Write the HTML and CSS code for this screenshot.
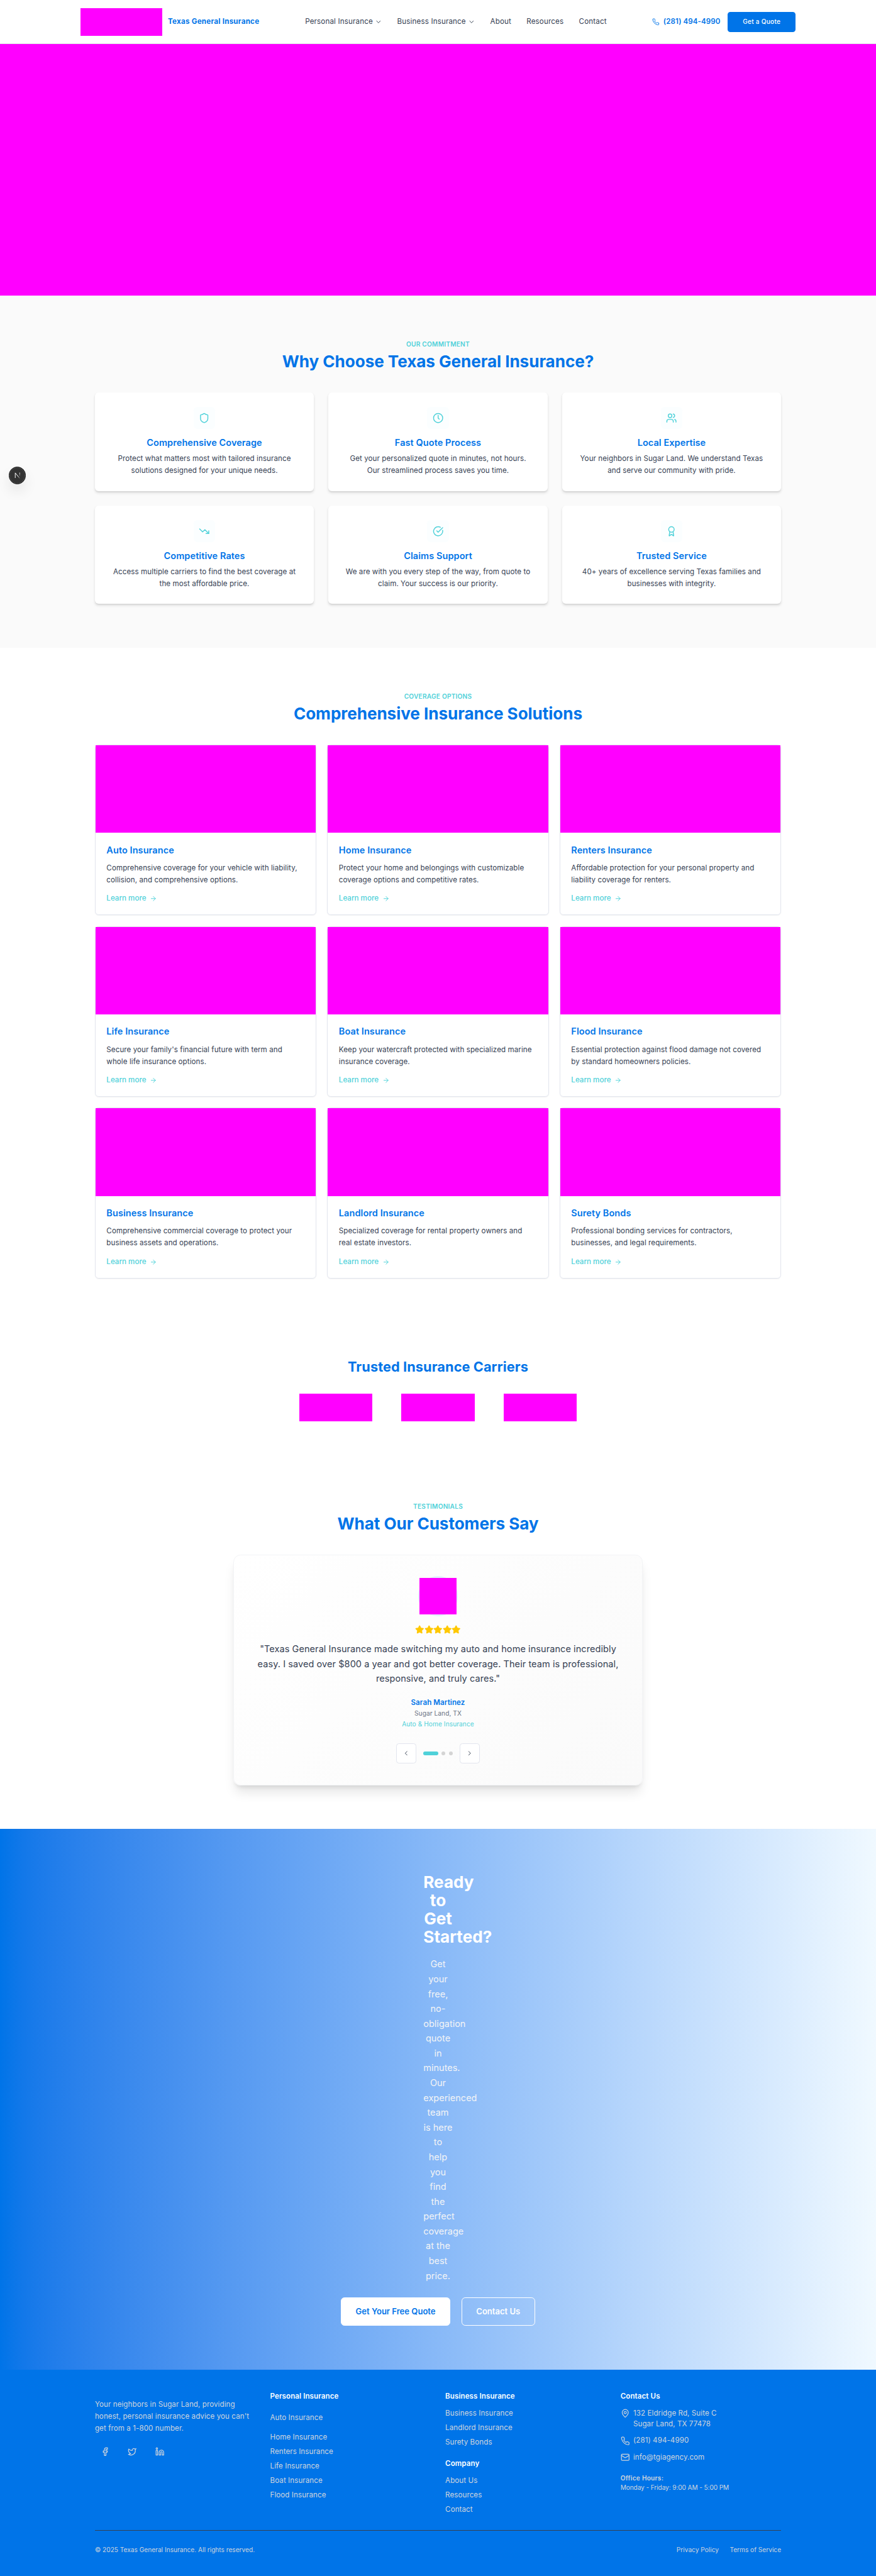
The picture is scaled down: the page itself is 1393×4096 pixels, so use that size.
FILE: index.html
```html
<!DOCTYPE html>
<html lang="en">
<head>
<meta charset="utf-8">
<title>Texas General Insurance</title>
<link rel="stylesheet" href="styles.css">
</head>
<body>
<svg class="sprite" aria-hidden="true">
  <symbol id="chevron-down" viewBox="0 0 24 24"><path d="m6 9 6 6 6-6"/></symbol>
  <symbol id="chevron-left" viewBox="0 0 24 24"><path d="m15 18-6-6 6-6"/></symbol>
  <symbol id="chevron-right" viewBox="0 0 24 24"><path d="m9 18 6-6-6-6"/></symbol>
  <symbol id="arrow-right" viewBox="0 0 24 24"><path d="M5 12h14"/><path d="m12 5 7 7-7 7"/></symbol>
  <symbol id="phone" viewBox="0 0 24 24"><path d="M22 16.92v3a2 2 0 0 1-2.18 2 19.79 19.79 0 0 1-8.63-3.07 19.5 19.5 0 0 1-6-6 19.79 19.79 0 0 1-3.07-8.67A2 2 0 0 1 4.11 2h3a2 2 0 0 1 2 1.72 12.84 12.84 0 0 0 .7 2.81 2 2 0 0 1-.45 2.11L8.09 9.91a16 16 0 0 0 6 6l1.27-1.27a2 2 0 0 1 2.11-.45 12.84 12.84 0 0 0 2.81.7A2 2 0 0 1 22 16.92z"/></symbol>
  <symbol id="shield" viewBox="0 0 24 24"><path d="M20 13c0 5-3.5 7.5-7.66 8.95a1 1 0 0 1-.67-.01C7.5 20.5 4 18 4 13V6a1 1 0 0 1 1-1c2 0 4.500-1.200 6.240-2.720a1.170 1.170 0 0 1 1.520 0C14.510 3.810 17 5 19 5a1 1 0 0 1 1 1z"/></symbol>
  <symbol id="clock" viewBox="0 0 24 24"><circle cx="12" cy="12" r="10"/><path d="M12 6v6l2.500 2.500"/></symbol>
  <symbol id="users" viewBox="0 0 24 24"><path d="M16 21v-2a4 4 0 0 0-4-4H6a4 4 0 0 0-4 4v2"/><circle cx="9" cy="7" r="4"/><path d="M22 21v-2a4 4 0 0 0-3-3.870"/><path d="M16 3.130a4 4 0 0 1 0 7.750"/></symbol>
  <symbol id="trending-down" viewBox="0 0 24 24"><path d="M16 17h6v-6"/><path d="m22 17-8.500-8.500-5 5L2 7"/></symbol>
  <symbol id="circle-check" viewBox="0 0 24 24"><path d="M21.801 10A10 10 0 1 1 17 3.335"/><path d="m9 11 3 3L22 4"/></symbol>
  <symbol id="award" viewBox="0 0 24 24"><path d="m15.477 12.890 1.515 8.526a.5.5 0 0 1-.81.47l-3.580-2.687a1 1 0 0 0-1.197 0l-3.586 2.686a.5.5 0 0 1-.81-.469l1.514-8.526"/><circle cx="12" cy="8" r="6"/></symbol>
  <symbol id="star" viewBox="0 0 24 24"><path d="M11.525 2.295a.53.53 0 0 1 .95 0l2.310 4.679a2.123 2.123 0 0 0 1.595 1.160l5.166.756a.53.53 0 0 1 .294.904l-3.736 3.638a2.123 2.123 0 0 0-.611 1.878l.882 5.140a.53.53 0 0 1-.771.560l-4.618-2.428a2.122 2.122 0 0 0-1.973 0L6.396 21.010a.53.53 0 0 1-.77-.560l.881-5.139a2.122 2.122 0 0 0-.611-1.879L2.160 9.795a.53.53 0 0 1 .294-.906l5.165-.755a2.122 2.122 0 0 0 1.597-1.160z"/></symbol>
  <symbol id="facebook" viewBox="0 0 24 24"><path d="M18 2h-3a5 5 0 0 0-5 5v3H7v4h3v8h4v-8h3l1-4h-4V7a1 1 0 0 1 1-1h3z"/></symbol>
  <symbol id="twitter" viewBox="0 0 24 24"><path d="M22 4s-.7 2.100-2 3.400c1.600 10-9.400 17.300-18 11.600 2.200.1 4.400-.6 6-2C3 15.500.5 9.600 3 5c2.200 2.600 5.600 4.100 9 4-.9-4.200 4-6.600 7-3.800 1.100 0 3-1.200 3-1.200z"/></symbol>
  <symbol id="linkedin" viewBox="0 0 24 24"><path d="M16 8a6 6 0 0 1 6 6v7h-4v-7a2 2 0 0 0-4 0v7h-4v-7a6 6 0 0 1 6-6z"/><rect x="2" y="9" width="4" height="12"/><circle cx="4" cy="4" r="2"/></symbol>
  <symbol id="map-pin" viewBox="0 0 24 24"><path d="M20 10c0 4.993-5.539 10.193-7.399 11.799a1 1 0 0 1-1.202 0C9.539 20.193 4 14.993 4 10a8 8 0 0 1 16 0"/><circle cx="12" cy="10" r="3"/></symbol>
  <symbol id="mail" viewBox="0 0 24 24"><rect x="2" y="4" width="20" height="16" rx="2"/><path d="m22 7-8.991 5.727a2 2 0 0 1-2.009 0L2 7"/></symbol>
</svg>

<header class="header">
  <div class="header-inner">
    <div class="brand"><div class="brand-logo"></div><span class="brand-name">Texas General Insurance</span></div>
    <nav class="nav">
      <a>Personal Insurance <svg class="icon nav-chevron"><use href="#chevron-down"/></svg></a>
      <a>Business Insurance <svg class="icon nav-chevron"><use href="#chevron-down"/></svg></a>
      <a>About</a>
      <a>Resources</a>
      <a>Contact</a>
    </nav>
    <div class="header-actions">
      <a class="header-phone"><svg class="icon"><use href="#phone"/></svg><span>(281) 494-4990</span></a>
      <a class="header-cta">Get a Quote</a>
    </div>
  </div>
</header>

<main>
<div class="hero"></div>

<section class="section features">
  <div class="container">
    <p class="eyebrow">OUR COMMITMENT</p>
    <h2 class="title">Why Choose Texas General Insurance?</h2>
    <div class="feature-grid">
      <article class="feature"><div class="feature-icon"><svg class="icon"><use href="#shield"/></svg></div><h3>Comprehensive Coverage</h3><p>Protect what matters most with tailored insurance<br>solutions designed for your unique needs.</p></article>
      <article class="feature"><div class="feature-icon"><svg class="icon"><use href="#clock"/></svg></div><h3>Fast Quote Process</h3><p>Get your personalized quote in minutes, not hours.<br>Our streamlined process saves you time.</p></article>
      <article class="feature"><div class="feature-icon"><svg class="icon"><use href="#users"/></svg></div><h3>Local Expertise</h3><p>Your neighbors in Sugar Land. We understand Texas<br>and serve our community with pride.</p></article>
      <article class="feature"><div class="feature-icon"><svg class="icon"><use href="#trending-down"/></svg></div><h3>Competitive Rates</h3><p>Access multiple carriers to find the best coverage at<br>the most affordable price.</p></article>
      <article class="feature"><div class="feature-icon"><svg class="icon"><use href="#circle-check"/></svg></div><h3>Claims Support</h3><p>We are with you every step of the way, from quote to<br>claim. Your success is our priority.</p></article>
      <article class="feature"><div class="feature-icon"><svg class="icon"><use href="#award"/></svg></div><h3>Trusted Service</h3><p>40+ years of excellence serving Texas families and<br>businesses with integrity.</p></article>
    </div>
  </div>
</section>

<section class="section">
  <div class="container">
    <p class="eyebrow">COVERAGE OPTIONS</p>
    <h2 class="title">Comprehensive Insurance Solutions</h2>
    <div class="service-grid">
      <article class="service"><div class="service-image"></div><div class="service-body"><h3>Auto Insurance</h3><p>Comprehensive coverage for your vehicle with liability,<br>collision, and comprehensive options.</p><a>Learn more <svg class="icon"><use href="#arrow-right"/></svg></a></div></article>
      <article class="service"><div class="service-image"></div><div class="service-body"><h3>Home Insurance</h3><p>Protect your home and belongings with customizable<br>coverage options and competitive rates.</p><a>Learn more <svg class="icon"><use href="#arrow-right"/></svg></a></div></article>
      <article class="service"><div class="service-image"></div><div class="service-body"><h3>Renters Insurance</h3><p>Affordable protection for your personal property and<br>liability coverage for renters.</p><a>Learn more <svg class="icon"><use href="#arrow-right"/></svg></a></div></article>
      <article class="service"><div class="service-image"></div><div class="service-body"><h3>Life Insurance</h3><p>Secure your family's financial future with term and<br>whole life insurance options.</p><a>Learn more <svg class="icon"><use href="#arrow-right"/></svg></a></div></article>
      <article class="service"><div class="service-image"></div><div class="service-body"><h3>Boat Insurance</h3><p>Keep your watercraft protected with specialized marine<br>insurance coverage.</p><a>Learn more <svg class="icon"><use href="#arrow-right"/></svg></a></div></article>
      <article class="service"><div class="service-image"></div><div class="service-body"><h3>Flood Insurance</h3><p>Essential protection against flood damage not covered<br>by standard homeowners policies.</p><a>Learn more <svg class="icon"><use href="#arrow-right"/></svg></a></div></article>
      <article class="service"><div class="service-image"></div><div class="service-body"><h3>Business Insurance</h3><p>Comprehensive commercial coverage to protect your<br>business assets and operations.</p><a>Learn more <svg class="icon"><use href="#arrow-right"/></svg></a></div></article>
      <article class="service"><div class="service-image"></div><div class="service-body"><h3>Landlord Insurance</h3><p>Specialized coverage for rental property owners and<br>real estate investors.</p><a>Learn more <svg class="icon"><use href="#arrow-right"/></svg></a></div></article>
      <article class="service"><div class="service-image"></div><div class="service-body"><h3>Surety Bonds</h3><p>Professional bonding services for contractors,<br>businesses, and legal requirements.</p><a>Learn more <svg class="icon"><use href="#arrow-right"/></svg></a></div></article>
    </div>
  </div>
</section>

<section class="carriers">
  <h2>Trusted Insurance Carriers</h2>
  <div class="carrier-row"><div class="carrier"></div><div class="carrier"></div><div class="carrier"></div></div>
</section>

<section class="section">
  <p class="eyebrow">TESTIMONIALS</p>
  <h2 class="title">What Our Customers Say</h2>
  <div class="testimonial">
    <div class="avatar"><div class="avatar-image"></div></div>
    <div class="stars"><svg class="icon"><use href="#star"/></svg><svg class="icon"><use href="#star"/></svg><svg class="icon"><use href="#star"/></svg><svg class="icon"><use href="#star"/></svg><svg class="icon"><use href="#star"/></svg></div>
    <blockquote>"Texas General Insurance made switching my auto and home insurance incredibly<br>easy. I saved over $800 a year and got better coverage. Their team is professional,<br>responsive, and truly cares."</blockquote>
    <p class="author">Sarah Martinez</p>
    <p class="place">Sugar Land, TX</p>
    <p class="policy">Auto &amp; Home Insurance</p>
    <div class="pager">
      <button aria-label="Previous"><svg class="icon"><use href="#chevron-left"/></svg></button>
      <div class="dots"><i class="dot active"></i><i class="dot"></i><i class="dot"></i></div>
      <button aria-label="Next"><svg class="icon"><use href="#chevron-right"/></svg></button>
    </div>
  </div>
</section>

<section class="cta">
  <div class="cta-text">
    <h2>Ready to Get Started?</h2>
    <p>Get your free, no-obligation quote in minutes. Our experienced team is&nbsp;here to help you find the perfect coverage at&nbsp;the best price.</p>
  </div>
  <div class="cta-buttons"><a class="btn btn-solid">Get Your Free Quote</a><a class="btn btn-outline">Contact Us</a></div>
</section>
</main>

<footer class="footer">
  <div class="container">
    <div class="footer-grid">
      <div>
        <p class="blurb">Your neighbors in Sugar Land, providing<br>honest, personal insurance advice you can't<br>get from a 1-800 number.</p>
        <div class="social">
          <a><svg class="icon"><use href="#facebook"/></svg></a><a><svg class="icon"><use href="#twitter"/></svg></a><a><svg class="icon"><use href="#linkedin"/></svg></a>
        </div>
      </div>
      <div>
        <h4>Personal Insurance</h4>
        <ul><li class="tall">Auto Insurance</li><li>Home Insurance</li><li>Renters Insurance</li><li>Life Insurance</li><li>Boat Insurance</li><li>Flood Insurance</li></ul>
      </div>
      <div>
        <h4>Business Insurance</h4>
        <ul><li>Business Insurance</li><li>Landlord Insurance</li><li>Surety Bonds</li></ul>
        <h4 class="second">Company</h4>
        <ul><li>About Us</li><li>Resources</li><li>Contact</li></ul>
      </div>
      <div>
        <h4>Contact Us</h4>
        <ul class="contact">
          <li class="address"><svg class="icon"><use href="#map-pin"/></svg><span>132 Eldridge Rd, Suite C<br>Sugar Land, TX 77478</span></li>
          <li><svg class="icon"><use href="#phone"/></svg><span>(281) 494-4990</span></li>
          <li><svg class="icon"><use href="#mail"/></svg><span>info@tgiagency.com</span></li>
        </ul>
        <p class="hours"><b>Office Hours:</b><br><span>Monday - Friday: 9:00 AM - 5:00 PM</span></p>
      </div>
    </div>
    <div class="legal"><p class="copyright">© 2025 Texas General Insurance. All rights reserved.</p><div class="legal-links"><a>Privacy Policy</a><a>Terms of Service</a></div></div>
  </div>
</footer>

<div class="dev-badge"><svg viewBox="0 0 36 36"><defs><linearGradient id="badge-fade" x1="0" y1="0" x2="0" y2="1"><stop offset="0" stop-color="#fff"/><stop offset="1" stop-color="#fff" stop-opacity="0"/></linearGradient><linearGradient id="badge-diagonal" x1="0" y1="0" x2="1" y2="1"><stop offset=".6" stop-color="#fff"/><stop offset="1" stop-color="#fff" stop-opacity=".2"/></linearGradient></defs><path d="M13 24V12.500" stroke="#fff"/><path d="M13 12.500 23.200 25" stroke="url(#badge-diagonal)"/><rect x="22.300" y="12" width="1.300" height="9" fill="url(#badge-fade)"/></svg></div>
</body>
</html>
```
FILE: styles.css
```css
/* 1rem is ten design pixels: the 1920px design is scaled to a 1393px page */
html { font-size: 7.2548px; }
*, *::before, *::after { box-sizing: border-box; }
body, h2, h3, h4, p, ul, blockquote { margin: 0; padding: 0; }
body {
  position: relative;
  font-family: Inter, "Liberation Sans", sans-serif;
  font-size: 1.6rem;
  line-height: 2.4rem;
  letter-spacing: .01rem;
  color: #364153;
  background: #fff;
  overflow-x: hidden;
}
ul { list-style: none; }
a { white-space: nowrap; }
.sprite { position: absolute; width: 0; height: 0; }
.icon {
  display: block; flex: none;
  width: 1.6rem; height: 1.6rem;
  fill: none; stroke: currentColor; stroke-width: 2;
  stroke-linecap: round; stroke-linejoin: round;
}
.container { width: 150.4rem; margin: 0 auto; }

.header { height: 9.7rem; border-bottom: 1px solid #dfe2e8; background: #fff; }
.header-inner { width: 156.8rem; height: 9.6rem; margin: 0 auto; display: flex; align-items: center; justify-content: space-between; }
.brand { display: flex; align-items: center; gap: 1.2rem; }
.brand-logo { width: 18rem; height: 6rem; background: #f0f; }
.brand-name { font-weight: 700; letter-spacing: .035rem; color: #0074e8; }
.nav { display: flex; gap: 3.35rem; letter-spacing: .02rem; }
.nav a { display: flex; align-items: center; gap: .4rem; }
.header-actions { display: flex; align-items: center; gap: 1.6rem; }
.header-phone { display: flex; align-items: center; gap: .8rem; color: #0074e8; font-weight: 600; }
.header-cta { width: 14.9rem; height: 4.4rem; border-radius: .6rem; background: #0074e8; color: #fff; font-size: 1.4rem; font-weight: 500; line-height: 4.4rem; letter-spacing: .03rem; text-align: center; }
.hero { height: 55.1rem; background: #f0f; }

.section { padding: 9.6rem 0; }
.eyebrow { font-size: 1.4rem; line-height: 2rem; font-weight: 600; letter-spacing: .03rem; color: #4fd1d9; text-align: center; }
.title { margin-top: .8rem; font-size: 3.6rem; line-height: 4rem; font-weight: 700; letter-spacing: -.008rem; color: #0074e8; text-align: center; }

.features { background: #fafafa; }
.feature-grid { margin-top: 4.8rem; display: grid; grid-template-columns: repeat(3, 1fr); gap: 3.2rem; }
.feature { height: 21.6rem; padding-top: 3.2rem; border-radius: .8rem; background: #fff; text-align: center; box-shadow: 0 .4rem .6rem -.1rem rgba(0,0,0,.1), 0 .2rem .4rem -.2rem rgba(0,0,0,.1); }
.feature-icon { width: 4.8rem; height: 4.8rem; margin: 0 auto 1.65rem; border-radius: .8rem; background: #fbfeff; color: #4fd1d9; display: grid; place-items: center; }
.feature-icon .icon { width: 2.4rem; height: 2.4rem; }
.feature h3, .service h3 { font-size: 2rem; line-height: 2.8rem; font-weight: 600; letter-spacing: .01rem; color: #0074e8; }
.feature p { margin-top: .8rem; line-height: 2.6rem; }

.service-grid { margin-top: 4.8rem; display: grid; grid-template-columns: repeat(3, 1fr); gap: 2.4rem; }
.service { height: 37.4rem; border: 1px solid #e2e5ee; border-radius: .8rem; box-shadow: 0 .1rem .2rem rgba(0,0,0,.05); }
.service-image { height: 19.2rem; background: #f0f; }
.service-body { padding: 2.4rem; }
.service p { margin-top: 1.25rem; line-height: 2.6rem; }
.service a { margin-top: 1.6rem; display: flex; align-items: center; gap: .8rem; color: #4fd1d9; font-weight: 500; letter-spacing: 0; }

.carriers { padding: 8rem 0; text-align: center; }
.carriers h2 { font-size: 3rem; line-height: 3.6rem; font-weight: 700; color: #0074e8; }
.carrier-row { margin-top: 4rem; display: flex; justify-content: center; gap: 6.4rem; }
.carrier { width: 16rem; height: 6.2rem; background: #f0f; }

.testimonial { width: 89.6rem; height: 50.5rem; margin: 4.8rem auto 0; padding-top: 4.5rem; border: 1px solid #f3f4f6; border-radius: 1.6rem; background: linear-gradient(135deg, #fff, #fafafa); text-align: center; box-shadow: 0 2rem 2.500rem -.5rem rgba(0,0,0,.1), 0 .8rem 1rem -.6rem rgba(0,0,0,.1); }
.avatar { width: 8.8rem; height: 8.8rem; margin: 0 auto; border-radius: 50%; background: #e3f1fc; display: grid; place-items: center; }
.avatar-image { width: 8rem; height: 8rem; background: #f0f; }
.stars { margin-top: 2rem; display: flex; justify-content: center; color: #ffc800; }
.stars .icon { width: 2rem; height: 2rem; fill: currentColor; }
.testimonial blockquote { margin-top: 1.55rem; font-size: 2rem; line-height: 3.250rem; }
.author { margin-top: 2.55rem; font-weight: 600; color: #0074e8; }
.place { margin-top: .05rem; font-size: 1.4rem; line-height: 2rem; color: #6a7282; }
.policy { margin-top: .4rem; font-size: 1.4rem; line-height: 2rem; color: #4fd1d9; }
.pager { margin-top: 3.2rem; display: flex; align-items: center; justify-content: center; gap: 1.6rem; }
.pager button { width: 4.4rem; height: 4.4rem; padding: 0; border: 1px solid #e2e5ee; border-radius: .6rem; background: #fff; color: #364153; display: grid; place-items: center; }
.dots { display: flex; gap: .8rem; }
.dot { width: .8rem; height: .8rem; border-radius: .4rem; background: #d4d4d4; }
.dot.active { width: 3.2rem; background: #4fd1d9; }

.cta { height: 118.500rem; padding-top: 9.6rem; background: linear-gradient(to right in oklab, #0074e8, #f0f9ff); color: #fff; text-align: center; letter-spacing: 0; }
.cta-text { width: 6.4rem; margin: 0 auto; }
.cta h2 { font-size: 3.6rem; line-height: 4rem; font-weight: 700; }
.cta p { margin-top: 2.4rem; font-size: 2rem; line-height: 3.250rem; color: #f3f4f6; }
.cta-buttons { margin-top: 3.2rem; display: flex; justify-content: center; gap: 2.4rem; }
.btn { height: 6.2rem; border: 1px solid #fff; border-radius: .8rem; font-size: 1.8rem; font-weight: 600; line-height: calc(6.2rem - 2px); }
.btn-solid { width: 24rem; background: #fff; color: #0074e8; }
.btn-outline { width: 16.2rem; }

.footer { height: 45.2rem; padding-top: 4.8rem; background: #0074e8; color: #d1d5dc; }
.footer-grid { height: 30.3rem; display: grid; grid-template-columns: repeat(4, 1fr); gap: 3.2rem; }
.blurb { margin-top: 1.6rem; line-height: 2.6rem; white-space: nowrap; }
.social { margin-top: 1.6rem; display: flex; gap: 1.6rem; }
.social a { width: 4.4rem; height: 4.4rem; display: grid; place-items: center; }
.social .icon, .contact .icon { width: 2rem; height: 2rem; }
.footer h4 { line-height: 1.950rem; font-weight: 600; color: #fff; }
.footer h4.second { margin-top: 2.35rem; }
.footer ul { margin-top: 1.65rem; display: grid; gap: .8rem; }
.footer li.tall { line-height: 4.4rem; }
.footer .contact { gap: 1.2rem; }
.contact li { display: flex; align-items: center; gap: .8rem; }
.contact li.address { align-items: flex-start; }
.address .icon { margin-top: .2rem; }
.hours { margin-top: 2.4rem; font-size: 1.4rem; line-height: 2rem; letter-spacing: -.015rem; }
.hours b { font-weight: 600; letter-spacing: .035rem; }
.legal { padding-top: 3.2rem; border-top: 1px solid #364153; display: flex; justify-content: space-between; font-size: 1.4rem; line-height: 2rem; letter-spacing: 0; }
.legal-links { display: flex; gap: 2.4rem; }

/* floats over the page, pinned to the left edge */
.dev-badge { position: absolute; left: 1.9rem; top: 102.300rem; width: 3.8rem; height: 3.8rem; border: 1px solid #171717; border-radius: 50%; background: #333; box-shadow: inset 0 0 0 1px #505050, 0 1.6rem 3.2rem -.8rem rgba(0,0,0,.24); }
.dev-badge svg { display: block; width: 100%; height: 100%; fill: none; stroke-width: 1.4; }
```
